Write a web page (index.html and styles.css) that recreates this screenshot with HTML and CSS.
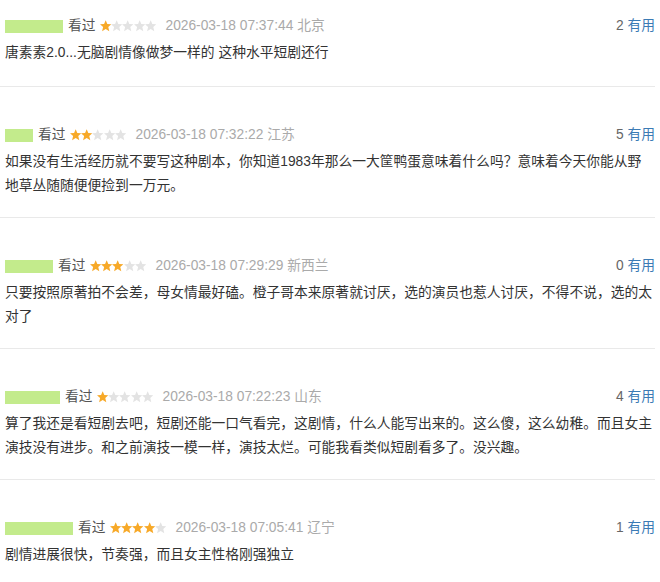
FILE: index.html
```html
<!DOCTYPE html>
<html lang="zh">
<head>
<meta charset="utf-8">
<title>短评</title>
<link rel="stylesheet" href="styles.css">
</head>
<body>
<svg width="0" height="0" class="defs" aria-hidden="true">
  <defs>
    <polygon id="star" points="6,0.2 7.7,4.2 12,4.5 8.7,7.4 9.8,11.8 6,9.5 2.2,11.8 3.3,7.4 0,4.5 4.3,4.2"/>
  </defs>
</svg>
<div class="list">

  <div class="item">
    <div class="head">
      <div class="meta">
        <span class="user" style="width:58px"></span>
        <span class="watched">看过</span>
        <span class="stars">
          <svg class="on" viewBox="0 0 12 12"><use href="#star"/></svg><svg viewBox="0 0 12 12"><use href="#star"/></svg><svg viewBox="0 0 12 12"><use href="#star"/></svg><svg viewBox="0 0 12 12"><use href="#star"/></svg><svg viewBox="0 0 12 12"><use href="#star"/></svg>
        </span>
        <span class="time">2026-03-18 07:37:44 北京</span>
      </div>
      <div class="votes"><span class="num">2</span> <span class="useful">有用</span></div>
    </div>
    <p class="text">唐素素2.0...无脑剧情像做梦一样的 这种水平短剧还行</p>
  </div>

  <div class="item">
    <div class="head">
      <div class="meta">
        <span class="user" style="width:28px"></span>
        <span class="watched">看过</span>
        <span class="stars">
          <svg class="on" viewBox="0 0 12 12"><use href="#star"/></svg><svg class="on" viewBox="0 0 12 12"><use href="#star"/></svg><svg viewBox="0 0 12 12"><use href="#star"/></svg><svg viewBox="0 0 12 12"><use href="#star"/></svg><svg viewBox="0 0 12 12"><use href="#star"/></svg>
        </span>
        <span class="time">2026-03-18 07:32:22 江苏</span>
      </div>
      <div class="votes"><span class="num">5</span> <span class="useful">有用</span></div>
    </div>
    <p class="text">如果没有生活经历就不要写这种剧本，你知道1983年那么一大筐鸭蛋意味着什么吗？意味着今天你能从野地草丛随随便便捡到一万元。</p>
  </div>

  <div class="item">
    <div class="head">
      <div class="meta">
        <span class="user" style="width:48px"></span>
        <span class="watched">看过</span>
        <span class="stars">
          <svg class="on" viewBox="0 0 12 12"><use href="#star"/></svg><svg class="on" viewBox="0 0 12 12"><use href="#star"/></svg><svg class="on" viewBox="0 0 12 12"><use href="#star"/></svg><svg viewBox="0 0 12 12"><use href="#star"/></svg><svg viewBox="0 0 12 12"><use href="#star"/></svg>
        </span>
        <span class="time">2026-03-18 07:29:29 新西兰</span>
      </div>
      <div class="votes"><span class="num">0</span> <span class="useful">有用</span></div>
    </div>
    <p class="text">只要按照原著拍不会差，母女情最好磕。橙子哥本来原著就讨厌，选的演员也惹人讨厌，不得不说，选的太对了</p>
  </div>

  <div class="item">
    <div class="head">
      <div class="meta">
        <span class="user" style="width:55px"></span>
        <span class="watched">看过</span>
        <span class="stars">
          <svg class="on" viewBox="0 0 12 12"><use href="#star"/></svg><svg viewBox="0 0 12 12"><use href="#star"/></svg><svg viewBox="0 0 12 12"><use href="#star"/></svg><svg viewBox="0 0 12 12"><use href="#star"/></svg><svg viewBox="0 0 12 12"><use href="#star"/></svg>
        </span>
        <span class="time">2026-03-18 07:22:23 山东</span>
      </div>
      <div class="votes"><span class="num">4</span> <span class="useful">有用</span></div>
    </div>
    <p class="text">算了我还是看短剧去吧，短剧还能一口气看完，这剧情，什么人能写出来的。这么傻，这么幼稚。而且女主演技没有进步。和之前演技一模一样，演技太烂。可能我看类似短剧看多了。没兴趣。</p>
  </div>

  <div class="item">
    <div class="head">
      <div class="meta">
        <span class="user" style="width:68px"></span>
        <span class="watched">看过</span>
        <span class="stars">
          <svg class="on" viewBox="0 0 12 12"><use href="#star"/></svg><svg class="on" viewBox="0 0 12 12"><use href="#star"/></svg><svg class="on" viewBox="0 0 12 12"><use href="#star"/></svg><svg class="on" viewBox="0 0 12 12"><use href="#star"/></svg><svg viewBox="0 0 12 12"><use href="#star"/></svg>
        </span>
        <span class="time">2026-03-18 07:05:41 辽宁</span>
      </div>
      <div class="votes"><span class="num">1</span> <span class="useful">有用</span></div>
    </div>
    <p class="text">剧情进展很快，节奏强，而且女主性格刚强独立</p>
  </div>

</div>
</body>
</html>
```

FILE: styles.css
```css
html, body {
  margin: 0;
  padding: 0;
  background: #ffffff;
}

body {
  font-family: "Liberation Sans", "Noto Sans CJK SC", sans-serif;
  font-size: 13.77px;
  color: #333333;
}

.defs {
  position: absolute;
  width: 0;
  height: 0;
  overflow: hidden;
}

.list {
  width: 655px;
}

.item {
  padding: 36px 0 19px 0;
  border-bottom: 1px solid #e9e9e9;
}

.item:first-child {
  padding-top: 14px;
  padding-bottom: 21px;
}

.head {
  display: flex;
  justify-content: space-between;
  align-items: center;
  height: 24px;
  line-height: 24px;
  padding-left: 5px;
  margin-bottom: 3px;
}

.meta {
  display: flex;
  align-items: center;
}

.user {
  display: inline-block;
  height: 13px;
  background: #c3eb8c;
  margin-right: 5px;
}

.watched {
  color: #555555;
  margin-right: 4px;
}

.stars {
  display: flex;
  align-items: center;
  margin-right: 9px;
}

.stars svg {
  width: 11.4px;
  height: 11.4px;
  fill: #e3e3e3;
  display: block;
}

.stars svg.on {
  fill: #f7a928;
}

.time {
  color: #aaaaaa;
}

.votes {
  color: #666666;
  white-space: nowrap;
}

.useful {
  color: #3b7bb5;
}

.text {
  margin: 0;
  padding-left: 5px;
  width: 650px;
  line-height: 24px;
  color: #333333;
}
```
